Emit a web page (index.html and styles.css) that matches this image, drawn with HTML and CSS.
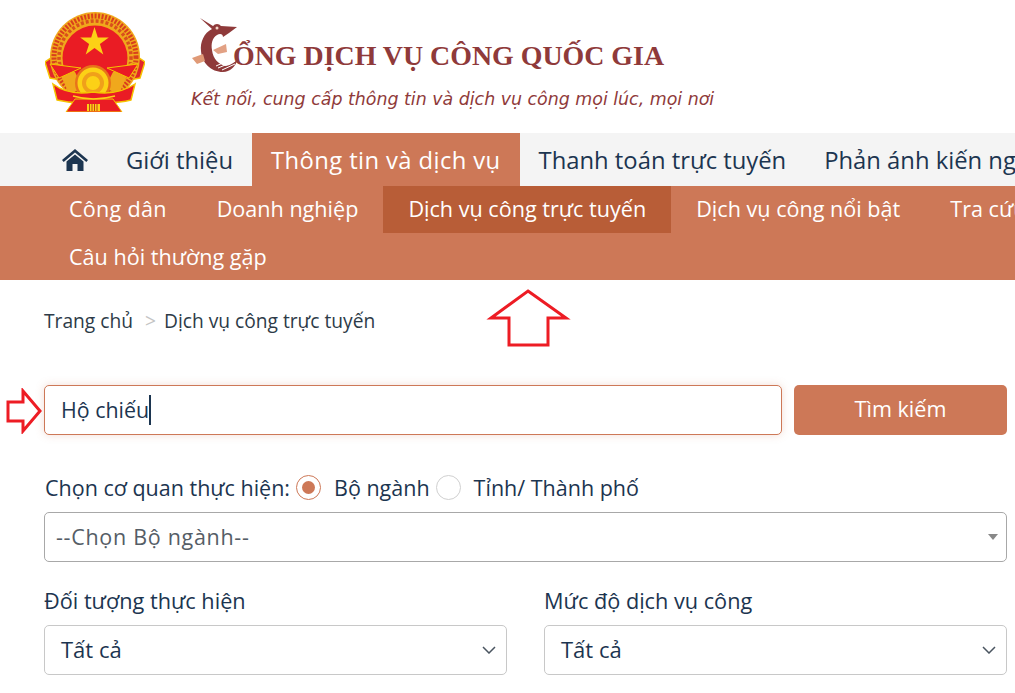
FILE: index.html
```html
<!DOCTYPE html>
<html lang="vi">
<head>
<meta charset="utf-8">
<title>Cổng Dịch vụ công Quốc gia</title>
<link rel="stylesheet" href="styles.css">
</head>
<body>
<header class="brand">
  <svg class="emblem" viewBox="0 0 100 100" width="100" height="100" aria-hidden="true">
    <path d="M5 66 L0 50 L9 44 L16 68 Z M95 66 L100 50 L91 44 L84 68 Z" fill="#e3262a" stroke="#f5c400" stroke-width="1.5"/>
    <circle cx="50" cy="45" r="45" fill="#f0a81c"/>
    <circle cx="50" cy="45" r="41" fill="none" stroke="#d9401c" stroke-width="5" stroke-dasharray="2 1.500"/>
    <circle cx="50" cy="45" r="36" fill="none" stroke="#d9501c" stroke-width="3.500" stroke-dasharray="3 2"/>
    <circle cx="50" cy="46" r="32.500" fill="#ea1c24"/>
    <polygon points="49.500,15 52.800,25.500 63.800,25.500 54.900,32 58.300,42.500 49.500,36 40.700,42.500 44.100,32 35.200,25.500 46.200,25.500" fill="#fcd116"/>
    <path d="M24 82 L10 50 L30 60 L38 76 Z M74 82 L88 50 L68 60 L60 76 Z" fill="#f0a81c"/>
    <path d="M5 52 L36 56 L14 66 Z M93 52 L62 56 L84 66 Z" fill="#ea1c24" stroke="#f5c400" stroke-width="1"/>
    <circle cx="48" cy="71" r="18" fill="#e8731a"/>
    <circle cx="48" cy="71" r="15.500" fill="#fcd116"/>
    <circle cx="48" cy="71" r="11" fill="#f0a01a"/>
    <circle cx="48" cy="71" r="7" fill="#fcd116"/>
    <path d="M8 72 Q24 84 48 80 Q72 84 90 72 L86 88 Q70 92 48 90 Q28 92 12 88 Z" fill="#ea1c24" stroke="#f5c400" stroke-width="1.500"/>
    <path d="M21 100 L30 87 H68 L77 100 Z" fill="#ea1c24" stroke="#f5c400" stroke-width="1"/>
    <path d="M28 84 Q48 90 70 84" fill="none" stroke="#fcd116" stroke-width="1.500"/>
    <path d="M42 92 H55 V99 H42 Z" fill="#fcd116"/>
    <path d="M44.500 92 V99 M47 92 V99 M49.500 92 V99 M52 92 V99" stroke="#c8401c" stroke-width="1"/>
  </svg>
  <div class="logo-wrap">
    <svg class="stork" viewBox="0 0 50 58" width="50" height="58" aria-hidden="true">
      <path d="M10 1 L23 9 A5 5 0 0 1 31 9 L47 10 L39 16 L33 20 C33 17 30 16 27 18 C22 21 21 27 22 33 C23 42 29 48 36 49 C41 48 45 45 48 42 C45 50 40 55 33 55 C21 55 12 46 11 34 C10 25 14 16 22 12 Z" fill="#8f3a3a"/>
      <circle cx="27" cy="11" r="1.500" fill="#f3d6c8"/>
      <path d="M23 33 L36 27 L37 35 L28 37 Z" fill="#e2a184"/>
      <path d="M2 41 L13 37 L15 44 L7 47 Z" fill="#e09a77"/>
      <path d="M26 49 L44 41 M28 51 L45 44 M32 53 L45 47" stroke="#fff" stroke-width="1"/>
    </svg>
    <div class="brand-text">
      <div class="brand-title">ỔNG DỊCH VỤ CÔNG QUỐC GIA</div>
      <div class="brand-tag">Kết nối, cung cấp thông tin và dịch vụ công mọi lúc, mọi nơi</div>
    </div>
  </div>
</header>

<nav class="mainnav">
  <a class="mainnav-item mainnav-home" aria-label="Trang chủ">
    <svg viewBox="0 0 26 22" width="26" height="22" aria-hidden="true">
      <path d="M13 0 L26 11 L24.300 13 L13 3.600 L1.700 13 L0 11 Z" fill="#1c3550"/>
      <path d="M4.500 12.500 L13 5.500 L21.500 12.500 V22 H15.500 V15 H10.500 V22 H4.500 Z" fill="#1c3550"/>
    </svg>
  </a>
  <a class="mainnav-item">Giới thiệu</a>
  <a class="mainnav-item is-active">Thông tin và dịch vụ</a>
  <a class="mainnav-item">Thanh toán trực tuyến</a>
  <a class="mainnav-item">Phản ánh kiến nghị</a>
</nav>

<div class="subnav">
  <div class="subnav-row">
    <a class="subnav-item subnav-first">Công dân</a>
    <a class="subnav-item">Doanh nghiệp</a>
    <a class="subnav-item is-active">Dịch vụ công trực tuyến</a>
    <a class="subnav-item">Dịch vụ công nổi bật</a>
    <a class="subnav-item">Tra cứu hồ sơ</a>
  </div>
  <div class="subnav-row">
    <a class="subnav-item">Câu hỏi thường gặp</a>
  </div>
</div>

<main class="content">
  <div class="crumbs"><span>Trang chủ</span><span class="crumb-sep">&gt;</span><span>Dịch vụ công trực tuyến</span></div>

  <div class="search">
    <div class="search-input">Hộ chiếu<span class="caret"></span></div>
    <button class="search-btn" type="button">Tìm kiếm</button>
  </div>

  <div class="agency">
    <span class="agency-label">Chọn cơ quan thực hiện:</span>
    <span class="radio is-on"></span>
    <span class="radio-text">Bộ ngành</span>
    <span class="radio"></span>
    <span class="radio-text">Tỉnh/ Thành phố</span>
  </div>

  <div class="select select-ministry">--Chọn Bộ ngành--<span class="tri"></span></div>

  <div class="filters">
    <div class="filter">
      <div class="filter-label">Đối tượng thực hiện</div>
      <div class="select select-small">Tất cả
        <svg class="chev" viewBox="0 0 14 8" width="14" height="8" aria-hidden="true"><path d="M1 1 L7 7 L13 1" fill="none" stroke="#4a5560" stroke-width="1.500"/></svg>
      </div>
    </div>
    <div class="filter">
      <div class="filter-label">Mức độ dịch vụ công</div>
      <div class="select select-small">Tất cả
        <svg class="chev" viewBox="0 0 14 8" width="14" height="8" aria-hidden="true"><path d="M1 1 L7 7 L13 1" fill="none" stroke="#4a5560" stroke-width="1.500"/></svg>
      </div>
    </div>
  </div>
</main>

<svg class="mark mark-up" viewBox="0 0 86 60" width="86" height="60" aria-hidden="true">
  <polygon points="43,2 81,29 63,29 63,56 24,56 24,29 6,29" fill="none" stroke="#ed1c24" stroke-width="3"/>
</svg>
<svg class="mark mark-left" viewBox="0 0 40 46" width="40" height="46" aria-hidden="true">
  <polygon points="36,23 19,3 19,14 4,14 4,33 19,33 19,43" fill="none" stroke="#ed1c24" stroke-width="3"/>
</svg>
</body>
</html>
```

FILE: styles.css
```css
* { box-sizing: border-box; }
html, body { margin: 0; padding: 0; }
body {
  width: 1015px;
  height: 693px;
  overflow: hidden;
  position: relative;
  background: #fff;
  color: #1c3550;
  font-family: "Open Sans", "Noto Sans", sans-serif;
}
a { color: inherit; text-decoration: none; }

.brand { height: 133px; display: flex; align-items: flex-start; padding: 12px 0 0 45px; }
.emblem { flex: none; }
.logo-wrap { display: flex; margin-left: 45px; margin-top: 5px; }
.stork { flex: none; }
.brand-text { margin-left: -7px; }
.brand-title {
  font-family: "Liberation Serif", serif;
  font-weight: 700;
  font-size: 27.900px;
  line-height: 36px;
  color: #8f3a3a;
  margin-top: 21px;
}
.brand-tag {
  margin: 13px 0 0 -42px;
  font-family: "DejaVu Sans", sans-serif;
  font-style: italic;
  font-size: 17.400px;
  line-height: 24px;
  color: #8f3a3a;
  white-space: nowrap;
}

.mainnav {
  height: 53px;
  background: #f4f4f4;
  display: flex;
  padding-left: 43px;
  white-space: nowrap;
  overflow: hidden;
}
.mainnav-item {
  flex: none;
  display: flex;
  align-items: center;
  padding: 1px 19px 0;
  font-size: 23.800px;
  color: #1c3550;
}
.mainnav-home { padding-top: 0; }
.mainnav-item.is-active { background: #cd7857; color: #fff; letter-spacing: 0.4px; }

.subnav { height: 94px; background: #cd7857; color: #fff; padding-left: 44px; overflow: hidden; }
.subnav-row { height: 47px; display: flex; white-space: nowrap; }
.subnav-item {
  flex: none;
  display: flex;
  align-items: center;
  padding: 0 25px 2px;
  font-size: 21.600px;
}
.subnav-first { letter-spacing: 0.25px; }
.subnav-row + .subnav-row .subnav-item { padding-bottom: 0; }
.subnav-item.is-active { background: #b85d37; }

.content { padding: 28px 8px 0 44px; }
.crumbs { display: flex; height: 24px; align-items: center; font-size: 19.200px; color: #2d3b48; }
.crumb-sep { color: #c4c4c4; margin: 0 8px 0 12px; }

.search { display: flex; gap: 12px; margin-top: 53px; }
.search-input {
  flex: 1;
  height: 50px;
  display: flex;
  align-items: center;
  padding: 0 0 2px 16px;
  font-size: 21.400px;
  color: #1c3550;
  background: #fff;
  border: 1px solid #cd7857;
  border-radius: 5px;
  box-shadow: 0 0 8px rgba(205, 120, 87, 0.25);
}
.caret { width: 2px; height: 30px; margin-top: 2px; background: #1c3550; }
.search-btn {
  flex: none;
  width: 213px;
  height: 50px;
  padding: 0 0 4px;
  border: 0;
  border-radius: 5px;
  background: #cd7857;
  color: #fff;
  font-family: inherit;
  font-size: 21.600px;
}

.agency { display: flex; align-items: center; height: 26px; margin-top: 39px; padding-left: 1px; font-size: 21.500px; white-space: nowrap; }
.agency-label { margin-right: 6px; }
.radio {
  flex: none;
  width: 25px;
  height: 25px;
  border: 1px solid #d0d0d0;
  border-radius: 50%;
  background: #fff;
  display: block;
  position: relative;
}
.radio.is-on { border-color: #cd7857; }
.radio.is-on::after {
  content: "";
  position: absolute;
  top: 5px;
  left: 5px;
  width: 13px;
  height: 13px;
  border-radius: 50%;
  background: #cd7857;
}
.radio-text { margin: 0 0 0 13px; }
.radio-text + .radio { margin-left: 6px; }

.select {
  position: relative;
  height: 50px;
  display: flex;
  align-items: center;
  background: #fff;
  border-radius: 5px;
  font-size: 22px;
}
.select-ministry { margin-top: 12px; border: 1px solid #a8a8a8; padding: 0 0 2px 11px; color: #555d66; font-size: 21.500px; letter-spacing: 0.7px; }
.tri {
  position: absolute;
  right: 8px;
  top: 21px;
  width: 0;
  height: 0;
  border-left: 5px solid transparent;
  border-right: 5px solid transparent;
  border-top: 6px solid #888;
}
.filters { display: flex; gap: 37px; margin-top: 26px; }
.filter { flex: 1; }
.filter-label { height: 26px; line-height: 26px; font-size: 21.700px; font-weight: 500; color: #1c3550; }
.select-small { margin-top: 11px; border: 1px solid #c8c8c8; padding: 0 0 2px 16px; color: #1c3550; font-weight: 500; }
.chev { position: absolute; right: 10px; top: 20px; }

.mark { position: absolute; }
.mark-up { left: 485px; top: 289px; }
.mark-left { left: 4px; top: 388px; }
```
